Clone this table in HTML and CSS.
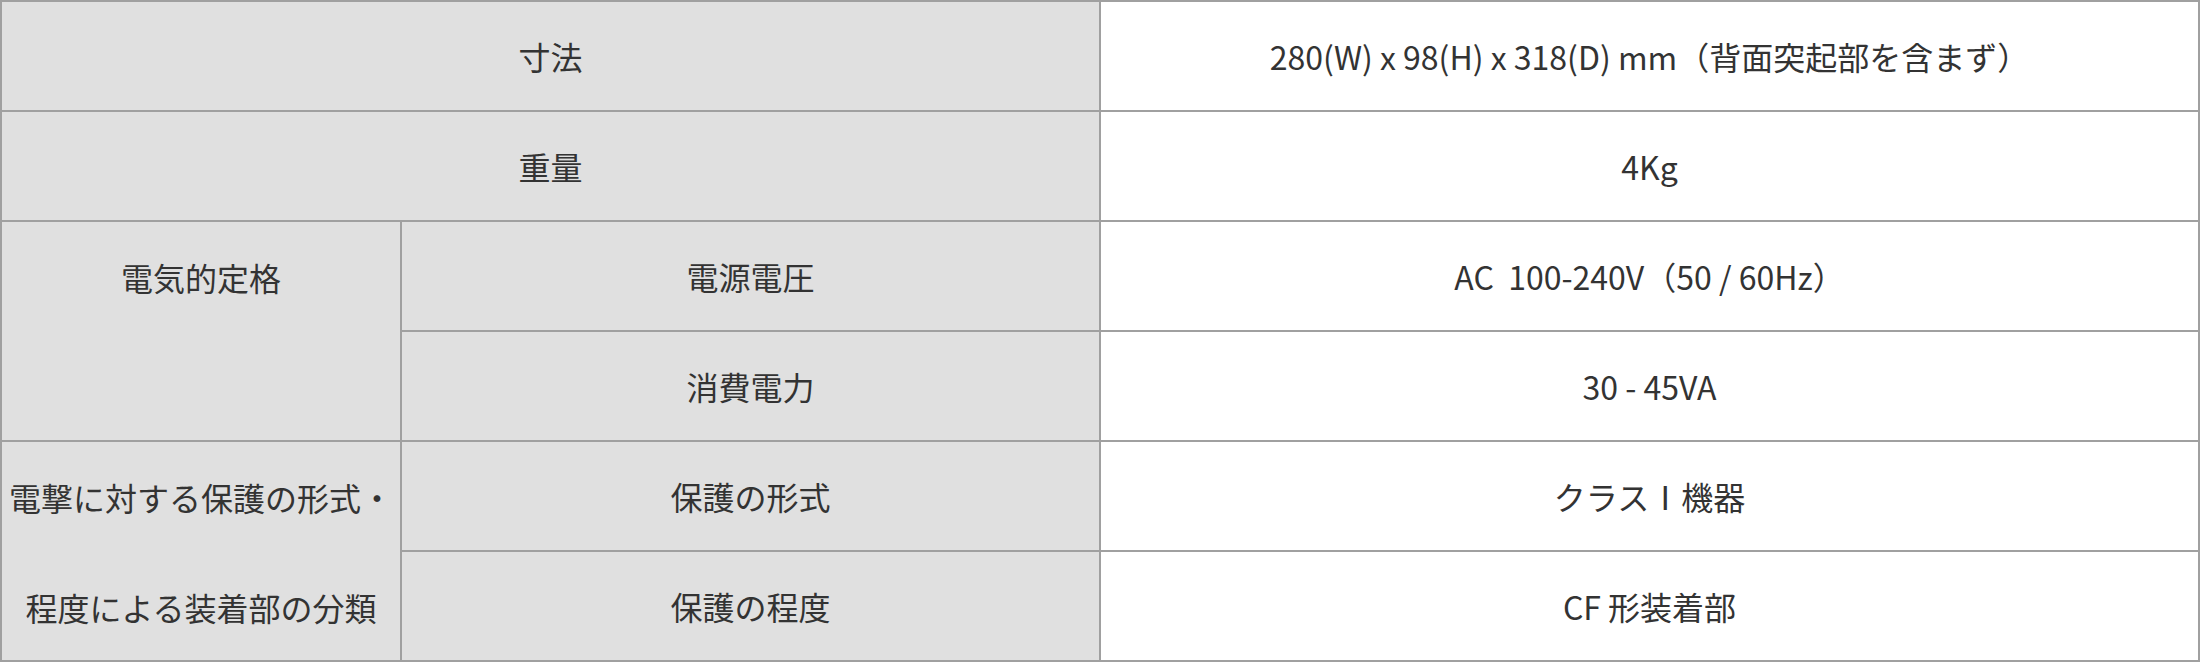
FILE: index.html
```html
<!DOCTYPE html>
<html lang="ja">
<head>
<meta charset="utf-8">
<title>仕様</title>
<link rel="stylesheet" href="styles.css">
</head>
<body>
<div class="spec">
  <div class="cell head span2">寸法</div>
  <div class="cell val">280(W) x 98(H) x 318(D) mm（背面突起部を含まず）</div>

  <div class="cell head span2">重量</div>
  <div class="cell val">4Kg</div>

  <div class="cell head group">電気的定格</div>
  <div class="cell head">電源電圧</div>
  <div class="cell val">AC&nbsp; 100-240V（50 / 60Hz）</div>
  <div class="cell head">消費電力</div>
  <div class="cell val">30 - 45VA</div>

  <div class="cell head group">電撃に対する保護の形式・<br>程度による装着部の分類</div>
  <div class="cell head">保護の形式</div>
  <div class="cell val">クラスⅠ機器</div>
  <div class="cell head">保護の程度</div>
  <div class="cell val">CF 形装着部</div>
</div>
</body>
</html>
```

FILE: styles.css
```css
html, body {
  margin: 0;
  padding: 0;
  background: #ffffff;
}

.spec {
  box-sizing: border-box;
  width: 2200px;
  display: grid;
  grid-template-columns: 398px 697px 1097px;
  grid-template-rows: repeat(6, 108px);
  gap: 2px;
  padding: 2px;
  background: #a0a0a0;
  font-family: "Noto Sans CJK JP", "Noto Sans", sans-serif;
  font-size: 32px;
  font-weight: 400;
  color: #333333;
}

.cell {
  display: flex;
  align-items: center;
  justify-content: center;
  text-align: center;
  line-height: 108px;
  white-space: nowrap;
}

.head {
  background: #e0e0e0;
}

.val {
  background: #ffffff;
}

.span2 {
  grid-column: span 2;
}

.group {
  grid-row: span 2;
  align-items: flex-start;
  line-height: 110px;
  margin-top: 0;
}
```
